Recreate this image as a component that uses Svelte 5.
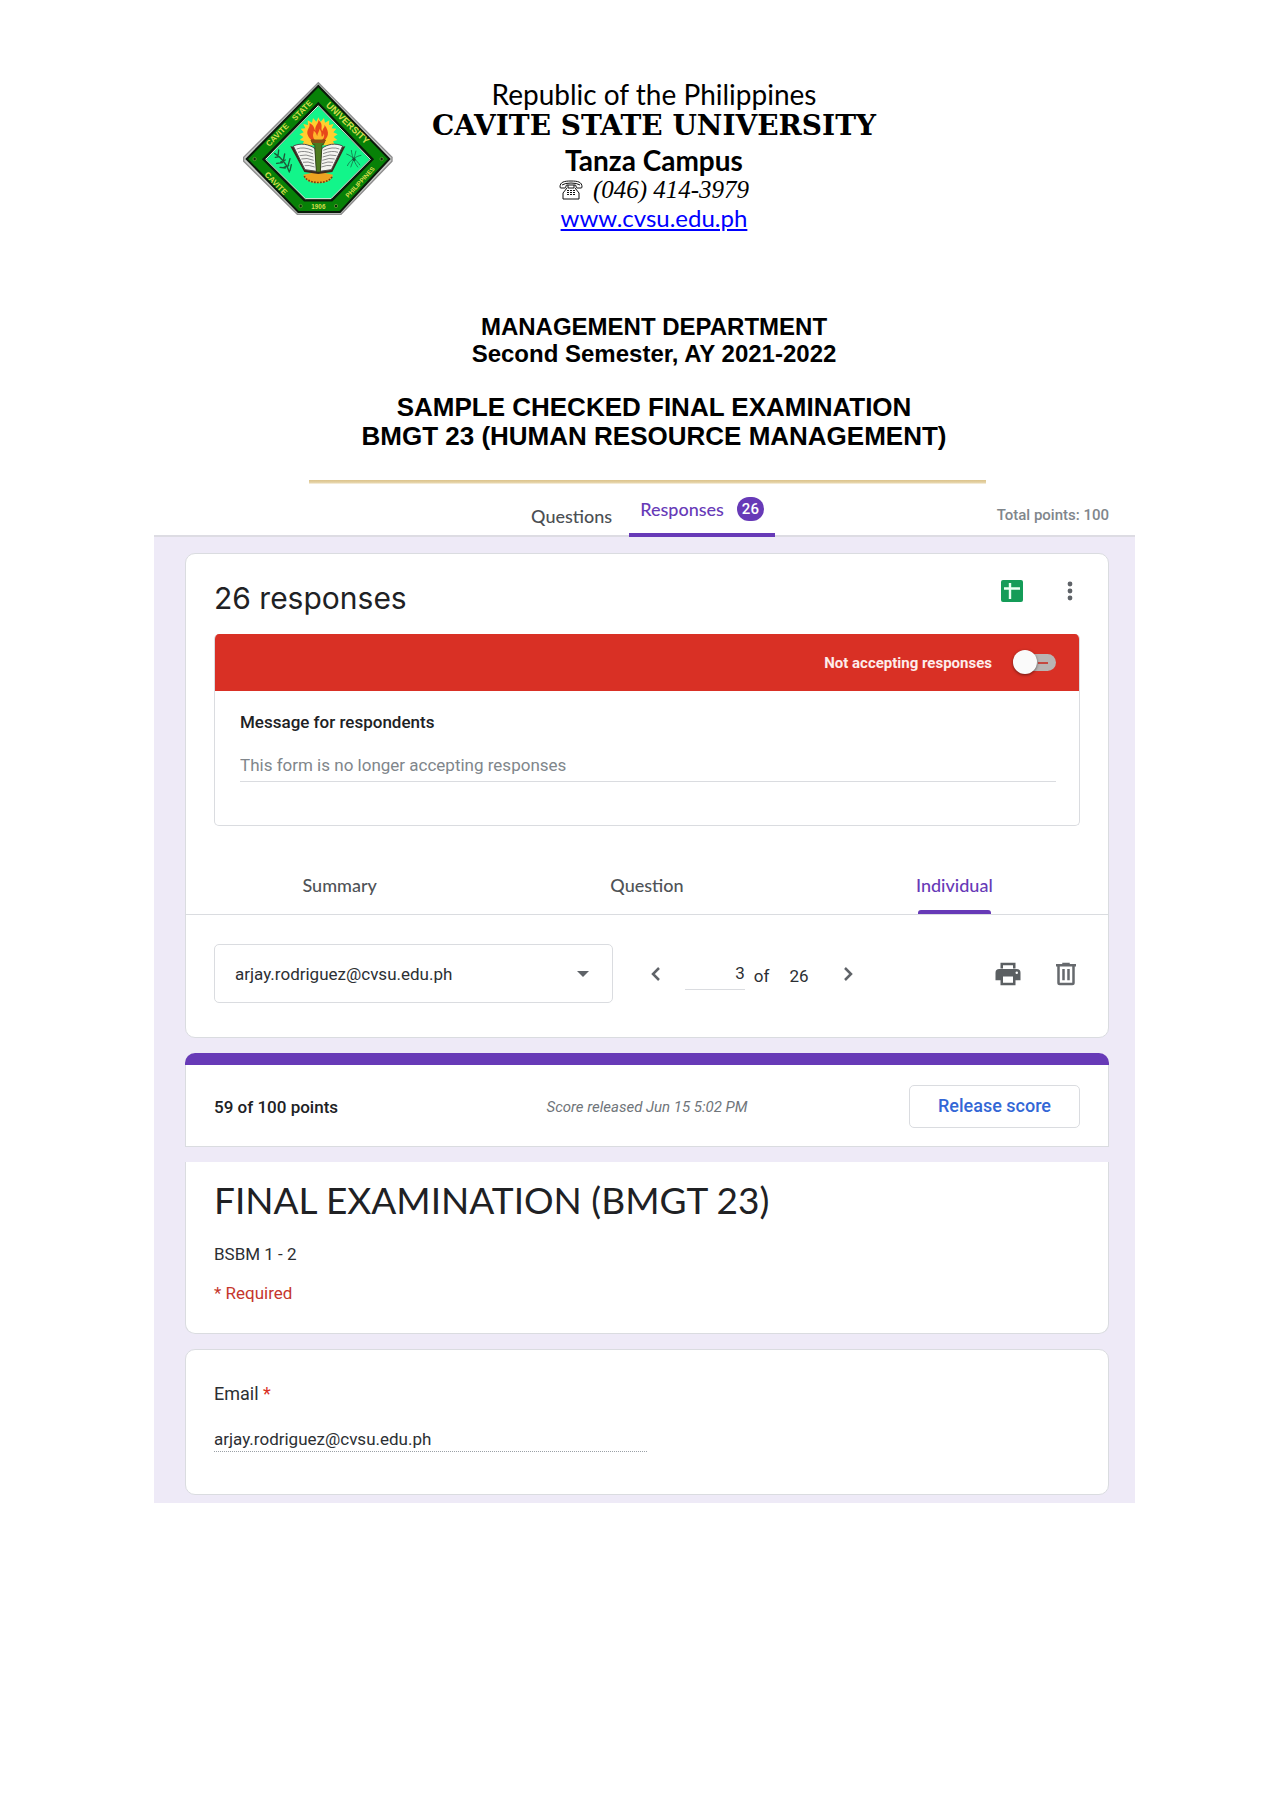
<script>
  let accepting = $state(false);
  let email = $state('arjay.rodriguez@cvsu.edu.ph');
  let message = $state('This form is no longer accepting responses');
  let current = $state(3);

  const views = ['Summary', 'Question', 'Individual'];
  let view = $state('Individual');
</script>

<main class="page">
  <header class="letterhead">
    <svg class="seal" viewBox="0 0 510 465" role="img" aria-label="Cavite State University seal">
      <path d="M253 38 L474 262 L474 274 L321 433 L190 433 L29 274 L29 262 Z" fill="#c9c9c9" stroke="#8d8d8d" stroke-width="4" />
      <path d="M253 48 L466 267 L318 426 L193 426 L38 267 Z" fill="#078107" stroke="#0a1a0a" stroke-width="6" />
      <path d="M253 102 L414 268 L293 390 L212 390 L90 268 Z" fill="#12f58a" stroke="#0a1a0a" stroke-width="9" />
      <path d="M253 107 L409 268 L291 386 L214 386 L95 268 Z" fill="none" stroke="#e4f5e4" stroke-width="3" />
      <g class="motto">
        <text transform="translate(106 231) rotate(-46)">CAVITE</text>
        <text transform="translate(184 154) rotate(-46)">STATE</text>
        <text class="large" transform="translate(274 107) rotate(44)">UNIVERSITY</text>
        <text transform="translate(90 315) rotate(46)">CAVITE</text>
        <text class="small" transform="translate(343 384) rotate(-47)">PHILIPPINES</text>
        <text class="small" x="232" y="416">1906</text>
      </g>
      <g fill="#0b2b0b" stroke="#6fae3c" stroke-width="2">
        <circle cx="62" cy="267" r="5" />
        <circle cx="443" cy="267" r="5" />
        <circle cx="200" cy="408" r="5" />
        <circle cx="306" cy="408" r="5" />
      </g>
      <path d="M253 142 l7 13 10-11 3 14 13-7-1 14 14-3-6 13 14 1-9 11 13 6-12 8 11 9-13 4 6 12H204l6-12-13-4 11-9-12-8 13-6-9-11 14-1-6-13 14 3-1-14 13 7 3-14 10 11Z" fill="#ffcf2e" />
      <path d="M233 211 C205 184 232 176 226 160 C242 166 240 178 244 182 C242 166 254 162 253 150 C270 164 258 174 265 184 C266 174 274 172 271 164 C290 188 280 202 272 211 Z" fill="#e8481a" />
      <path d="M243 211 C232 196 240 190 239 182 C248 188 247 194 250 198 C250 188 257 184 256 176 C266 188 260 194 264 200 C268 198 269 194 269 190 C274 202 266 207 264 211 Z" fill="#ffb52b" />
      <path d="M208 314 C215 348 290 348 297 314 L270 308 H236 Z" fill="#eda321" />
      <path d="M211 318 C220 344 286 344 295 318" fill="none" stroke="#7b3a10" stroke-width="5" stroke-dasharray="5 4" />
      <path d="M169 229 L211 306 L253 312 L295 306 L334 229 L322 231 L253 300 L184 231 Z" fill="#3b2a1c" />
      <path d="M178 228 C200 218 225 222 243 236 L248 304 L213 299 Z" fill="#f4f4f0" stroke="#4c4c4c" stroke-width="3" />
      <path d="M326 228 C304 218 280 222 263 236 L258 304 L292 299 Z" fill="#f4f4f0" stroke="#4c4c4c" stroke-width="3" />
      <g fill="none" stroke="#8b8b8b" stroke-width="3">
        <path d="M188 237 q20-8 48 4M192 247 q18-7 45 4M197 257 q18-6 41 4M202 267 q16-5 37 4M207 277 q14-4 33 4M212 287 q12-3 30 4M316 237 q-20-8-48 4M312 247 q-18-7-45 4M307 257 q-18-6-41 4M302 267 q-16-5-37 4M297 277 q-14-4-33 4M292 287 q-12-3-30 4" />
      </g>
      <path d="M231 210 H274 L268 224 H264 L259 306 H247 L242 224 H237 Z" fill="#4d7a1f" stroke="#27330f" stroke-width="2" />
      <path d="M230 210 H275 L271 219 H234 Z" fill="#8a4c14" />
      <g fill="none" stroke="#1c5a38" stroke-width="4" stroke-linecap="round">
        <path d="M122 250 C140 262 158 280 166 306M124 262l12-2M134 240l-2 18M140 276l14-6M152 252l-4 20M150 292l14-6M168 266l-6 22M128 280l18-2M172 284l-4 18M138 292l16 2" />
      </g>
      <g fill="none" stroke="#17553a" stroke-width="2">
        <path d="M337 252 C350 256 370 272 378 286M382 256 C366 258 346 272 340 288M352 240 C354 262 364 282 372 292M366 242 C362 262 354 280 350 292" />
        <circle cx="360" cy="268" r="4" fill="#17553a" />
      </g>
    </svg>
    <div class="school">
      <p class="republic">Republic of the Philippines</p>
      <p class="university">CAVITE STATE UNIVERSITY</p>
      <p class="campus">Tanza Campus</p>
      <p class="phone">
        <svg viewBox="0 0 24 20" aria-hidden="true">
          <g fill="none" stroke="#111" stroke-width="1">
            <path d="M1 7 C1 2 5 1 12 1 S23 2 23 7 Q23 8 22 8 H18 Q17 8 17 6 Q17 5 16 5 H8 Q7 5 7 6 Q7 8 6 8 H2 Q1 8 1 7 Z" />
            <path d="M3 5 Q6 3 12 3 T21 5M9 5v3h6V5M8 8 L4 13 V19 H20 V13 L16 8" />
          </g>
          <path d="M8 10h2v1H8zM11 10h2v1h-2zM14 10h2v1h-2zM8 12h2v1H8zM11 12h2v1h-2zM14 12h2v1h-2zM8 14h2v1H8zM11 14h2v1h-2zM14 14h2v1h-2z" fill="#111" />
        </svg>
        <span>(046) 414-3979</span>
      </p>
      <p class="site"><a href="http://www.cvsu.edu.ph">www.cvsu.edu.ph</a></p>
    </div>
  </header>

  <section class="heading">
    <p class="dept">MANAGEMENT DEPARTMENT</p>
    <p class="dept">Second Semester, AY 2021-2022</p>
    <h1>SAMPLE CHECKED FINAL EXAMINATION<br />BMGT 23 (HUMAN RESOURCE MANAGEMENT)</h1>
  </section>

  <section class="form">
    <div class="strip"></div>
    <nav class="topbar">
      <div class="toptabs">
        <button class="toptab">Questions</button>
        <button class="toptab active">Responses <span class="badge">26</span></button>
      </div>
      <span class="total">Total points: 100</span>
    </nav>

    <div class="cards">
      <article class="card">
        <div class="summary">
          <h2>26 responses</h2>
          <div class="tools">
            <button class="icon" aria-label="View in Sheets">
              <svg viewBox="0 0 30 30">
                <rect x="4" y="4" width="22" height="22" rx="2" fill="#149c58" />
                <path d="M7 12.500H23M13 7V23" stroke="#e9fff2" stroke-width="2.400" fill="none" />
              </svg>
            </button>
            <button class="icon" aria-label="More options">
              <svg viewBox="0 0 30 30" fill="#5f6368">
                <circle cx="15" cy="8" r="2.400" />
                <circle cx="15" cy="15" r="2.400" />
                <circle cx="15" cy="22" r="2.400" />
              </svg>
            </button>
          </div>
        </div>

        <div class="panel">
          <label class="status">
            <span>Not accepting responses</span>
            <input type="checkbox" bind:checked={accepting} />
          </label>
          <div class="message">
            <label for="message">Message for respondents</label>
            <input id="message" type="text" bind:value={message} />
          </div>
        </div>

        <div class="views">
          {#each views as name}
            <button class="view" class:active={view === name} onclick={() => (view = name)}>
              <span>{name}</span>
            </button>
          {/each}
        </div>

        <div class="pager">
          <div class="picker">
            <select aria-label="Respondent" bind:value={email}>
              <option>arjay.rodriguez@cvsu.edu.ph</option>
            </select>
            <svg class="arrow" viewBox="0 0 12 6" aria-hidden="true"><path d="M0 0h12L6 6z" fill="#5f6368" /></svg>
          </div>
          <div class="steps">
            <button class="icon" aria-label="Previous response">
              <svg viewBox="0 0 30 30"><path d="M18 9l-6 6 6 6" fill="none" stroke="#5f6368" stroke-width="2.500" /></svg>
            </button>
            <input class="current" aria-label="Response number" type="text" bind:value={current} />
            <span class="of">of</span>
            <span class="count">26</span>
            <button class="icon" aria-label="Next response">
              <svg viewBox="0 0 30 30"><path d="M12 9l6 6-6 6" fill="none" stroke="#5f6368" stroke-width="2.500" /></svg>
            </button>
          </div>
          <div class="tools">
            <button class="icon" aria-label="Print response">
              <svg viewBox="0 0 24 24" fill="#5b5f62">
                <path d="M18 7.500V3H6v4.500h2V5h8v2.500zM19 8H5a3 3 0 0 0-3 3v6h4v4h12v-4h4v-6a3 3 0 0 0-3-3zm-3 11H8v-5h8zm3-7a1 1 0 1 1 0-2 1 1 0 0 1 0 2z" />
              </svg>
            </button>
            <button class="icon" aria-label="Delete response">
              <svg viewBox="0 0 24 24" fill="#66696d">
                <path d="M15 4V3H9v1H4v2h1v13a2 2 0 0 0 2 2h10a2 2 0 0 0 2-2V6h1V4zm2 15H7V6h10zM9 8h2v9H9zm4 0h2v9h-2z" />
              </svg>
            </button>
          </div>
        </div>
      </article>

      <article class="card score">
        <div class="accent"></div>
        <div class="scorerow">
          <strong>59 of 100 points</strong>
          <em>Score released Jun 15 5:02 PM</em>
          <button class="release">Release score</button>
        </div>
      </article>

      <article class="card title">
        <h2>FINAL EXAMINATION (BMGT 23)</h2>
        <p>BSBM 1 - 2</p>
        <p class="required">* Required</p>
      </article>

      <article class="card answer">
        <label for="email">Email <span>*</span></label>
        <input id="email" type="text" bind:value={email} />
      </article>
    </div>
  </section>
</main>

<style>
  :global(body) {
    margin: 0;
    background: #fff;
  }
  .page,
  .page * {
    box-sizing: border-box;
  }
  .page {
    padding: 78px 137px 64px 154px;
    font-family: Roboto, 'Liberation Sans', sans-serif;
    font-size: 17px;
    line-height: 24px;
    color: #2c2f33;
  }
  p,
  h1,
  h2 {
    margin: 0;
  }
  button {
    border: 0;
    background: none;
    padding: 0;
    font: inherit;
    color: inherit;
    cursor: pointer;
  }
  input,
  select {
    font: inherit;
    color: inherit;
    border: 0;
    background: none;
    padding: 0;
    outline: 0;
    border-radius: 0;
  }

  .letterhead {
    display: grid;
    grid-template-columns: 1fr auto 1fr;
    column-gap: 28px;
    padding-left: 19px;
    color: #000;
  }
  .seal {
    width: 170px;
    height: 155px;
    margin-top: -8px;
    justify-self: end;
  }
  .motto {
    font-family: 'Liberation Sans', sans-serif;
    font-weight: 700;
    font-size: 24px;
    fill: #d6dc4e;
  }
  .motto .large {
    font-size: 28px;
  }
  .motto .small {
    font-size: 19px;
  }
  .school {
    text-align: center;
    font-family: Lato, sans-serif;
  }
  .republic {
    font-size: 28px;
    line-height: 32px;
  }
  .university {
    font-family: 'DejaVu Serif', serif;
    font-weight: 700;
    font-size: 28px;
    line-height: 32px;
  }
  .campus {
    font-size: 28px;
    font-weight: 700;
    line-height: 36px;
  }
  .phone {
    display: flex;
    justify-content: center;
    align-items: center;
    gap: 10px;
    font-family: 'Liberation Serif', serif;
    font-style: italic;
    font-size: 25px;
    line-height: 24px;
  }
  .phone svg {
    width: 24px;
    height: 20px;
  }
  .site {
    font-size: 24px;
    line-height: 32px;
  }
  .site a {
    color: #00f;
  }

  .heading {
    margin-top: 79px;
    padding-left: 19px;
    text-align: center;
    font-family: 'Liberation Sans', sans-serif;
    font-weight: 700;
    color: #000;
  }
  .dept {
    font-size: 24px;
    line-height: 27px;
  }
  h1 {
    margin-top: 26px;
    font-size: 26px;
    line-height: 29px;
    font-weight: 700;
  }

  .form {
    margin-top: 29px;
  }
  .strip {
    width: 69%;
    height: 4px;
    margin-left: 155px;
    background: linear-gradient(#dcc48c, #e4d1a4 60%, #faf5ea);
  }
  .topbar {
    display: grid;
    grid-template-columns: 1fr auto 1fr;
    height: 53px;
    border-bottom: 2px solid #dddce3;
    font-weight: 500;
  }
  .toptabs {
    grid-column: 2;
    display: flex;
    font-family: Lato, sans-serif;
    font-size: 18px;
    font-weight: 500;
    color: #4b4f54;
    margin-bottom: -2px;
  }
  .toptab {
    display: flex;
    align-items: center;
    gap: 13px;
    padding: 14px 17px 4px;
  }
  .toptab.active {
    padding: 3px 11px 3px;
    border-bottom: 4px solid #673ab7;
    border-radius: 3px 3px 0 0;
    color: #673ab7;
  }
  .badge {
    width: 27px;
    border-radius: 12px;
    background: #673ab7;
    color: #fff;
    font-family: Roboto, sans-serif;
    font-size: 15px;
    line-height: 24px;
    text-align: center;
  }
  .total {
    justify-self: end;
    margin-right: 26px;
    padding-top: 19px;
    font-size: 15px;
    color: #80868b;
  }

  .cards {
    display: flex;
    flex-direction: column;
    gap: 15px;
    padding: 16px 26px 8px 31px;
    background: #eeeaf7;
  }
  .card {
    border: 1px solid #dadce0;
    border-radius: 10px;
    background: #fff;
  }
  h2 {
    font-weight: 400;
    color: #202124;
  }
  .summary {
    display: flex;
    justify-content: space-between;
    align-items: flex-start;
    padding: 22px 23px 14px 28px;
  }
  .summary h2 {
    font-family: Inter, sans-serif;
    font-size: 30px;
    line-height: 44px;
  }
  .tools {
    display: flex;
    gap: 28px;
  }
  .icon,
  .icon svg {
    display: block;
    width: 30px;
    height: 30px;
  }
  .panel {
    margin: 0 28px;
    border: 1px solid #dadce0;
    border-top: 0;
    border-radius: 5px;
    overflow: hidden;
  }
  .status {
    display: flex;
    justify-content: flex-end;
    align-items: center;
    gap: 21px;
    height: 57px;
    margin: 0 -1px;
    padding-right: 24px;
    background: #d93025;
    color: #fdeceb;
    font-size: 15px;
    font-weight: 700;
  }
  .status input {
    appearance: none;
    position: relative;
    width: 43px;
    height: 17px;
    margin: 0;
    border-radius: 9px;
    background: linear-gradient(#c5483f, #c5483f) 25px 8px / 10px 2px no-repeat #b9b4b3;
  }
  .status input::before {
    content: '';
    position: absolute;
    left: 0;
    top: -4px;
    width: 24px;
    height: 24px;
    border-radius: 50%;
    background: #fafafa;
    box-shadow: 0 1px 3px rgba(0, 0, 0, 0.5);
  }
  .status input:checked::before {
    left: 19px;
  }
  .message {
    padding: 19px 23px 43px 25px;
  }
  .message label {
    display: block;
    font-weight: 500;
    color: #202124;
  }
  .message input {
    display: block;
    width: 100%;
    height: 34px;
    margin-top: 14px;
    border-bottom: 1px solid #dadce0;
    color: #80868b;
  }
  .views {
    display: grid;
    grid-template-columns: repeat(3, 1fr);
    height: 60px;
    margin-top: 29px;
    border-bottom: 1px solid #dadce0;
    font-family: Lato, sans-serif;
    font-size: 18px;
    font-weight: 500;
    color: #4f5357;
  }
  .view {
    display: flex;
    justify-content: center;
  }
  .view span {
    position: relative;
    padding: 18px 0 17px;
  }
  .view.active span {
    color: #673ab7;
  }
  .view.active span::after {
    content: '';
    position: absolute;
    left: 2px;
    right: 2px;
    bottom: 0;
    height: 4px;
    border-radius: 3px 3px 0 0;
    background: #673ab7;
  }
  .pager {
    display: flex;
    align-items: center;
    padding: 29px 27px 34px 28px;
  }
  .picker {
    position: relative;
    width: 46%;
  }
  .picker select {
    appearance: none;
    display: block;
    width: 100%;
    height: 59px;
    padding: 0 48px 0 20px;
    border: 1px solid #dadce0;
    border-radius: 5px;
  }
  .arrow {
    position: absolute;
    right: 24px;
    top: 27px;
    width: 12px;
    height: 6px;
    pointer-events: none;
  }
  .steps {
    display: flex;
    align-items: center;
    margin-left: 28px;
    margin-right: auto;
  }
  .current {
    width: 60px;
    height: 32px;
    margin: 0 9px 0 14px;
    border-bottom: 1px solid #dadce0;
    text-align: right;
  }
  .of,
  .count {
    padding-top: 4px;
  }
  .of {
    margin-right: 20px;
  }
  .count {
    margin-right: 24px;
  }

  .score {
    border-top: 0;
    border-radius: 10px 10px 0 0;
  }
  .accent {
    height: 12px;
    margin: 0 -1px;
    border-radius: 10px 10px 0 0;
    background: #673ab7;
  }
  .scorerow {
    display: grid;
    grid-template-columns: 1fr auto 1fr;
    align-items: center;
    padding: 20px 28px 18px;
  }
  .scorerow strong {
    font-weight: 500;
    color: #202124;
  }
  .scorerow em {
    font-size: 15px;
    color: #70757a;
  }
  .release {
    justify-self: end;
    padding: 8px 28px 9px;
    border: 1px solid #dadce0;
    border-radius: 5px;
    color: #3367d6;
    font-size: 18px;
    font-weight: 500;
  }

  .title {
    border-top: 0;
    border-radius: 0 0 10px 10px;
    padding: 14px 28px 28px;
  }
  .title h2 {
    font-family: Lato, sans-serif;
    font-size: 37px;
    line-height: 48px;
    margin-bottom: 18px;
  }
  .title .required {
    margin-top: 15px;
    color: #c5362c;
  }
  .answer {
    padding: 32px 28px 42px;
  }
  .answer label {
    display: block;
    font-size: 18px;
  }
  .answer label span {
    color: #d93025;
  }
  .answer input {
    display: block;
    width: 50%;
    height: 25px;
    margin-top: 21px;
    border-bottom: 1px dotted #9aa0a6;
  }
</style>
